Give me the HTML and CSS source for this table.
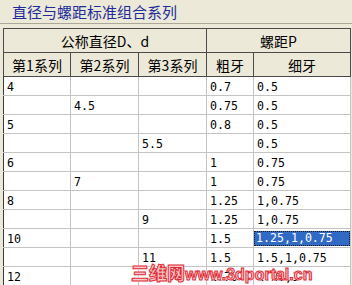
FILE: index.html
```html
<!DOCTYPE html>
<html lang="zh-CN">
<head>
<meta charset="utf-8">
<link rel="stylesheet" href="styles.css">
</head>
<body>
<div class="page">
  <div class="title">直径与螺距标准组合系列</div>
  <table class="grid">
    <colgroup>
      <col class="c1"><col class="c2"><col class="c3"><col class="c4"><col class="c5">
    </colgroup>
    <thead>
      <tr class="h"><th colspan="3">公称直径D、d</th><th colspan="2">螺距P</th></tr>
      <tr class="h"><th>第1系列</th><th>第2系列</th><th>第3系列</th><th>粗牙</th><th>细牙</th></tr>
    </thead>
    <tbody>
      <tr><td>4</td><td></td><td></td><td>0.7</td><td>0.5</td></tr>
      <tr><td></td><td>4.5</td><td></td><td>0.75</td><td>0.5</td></tr>
      <tr><td>5</td><td></td><td></td><td>0.8</td><td>0.5</td></tr>
      <tr><td></td><td></td><td>5.5</td><td></td><td>0.5</td></tr>
      <tr><td>6</td><td></td><td></td><td>1</td><td>0.75</td></tr>
      <tr><td></td><td>7</td><td></td><td>1</td><td>0.75</td></tr>
      <tr><td>8</td><td></td><td></td><td>1.25</td><td>1,0.75</td></tr>
      <tr><td></td><td></td><td>9</td><td>1.25</td><td>1,0.75</td></tr>
      <tr><td>10</td><td></td><td></td><td>1.5</td><td class="selcell"><span class="sel">1.25,1,0.75</span></td></tr>
      <tr><td></td><td></td><td>11</td><td>1.5</td><td>1.5,1,0.75</td></tr>
      <tr><td>12</td><td></td><td></td><td>1.75</td><td>1.25,1</td></tr>
    </tbody>
  </table>
  <div class="mark"><span class="mark-cn">三维网</span>www.3dportal.cn</div>
</div>
</body>
</html>
```
FILE: styles.css
```css
html, body {
  margin: 0;
  padding: 0;
  background: #ece9d8;
}
.page {
  position: relative;
  width: 352px;
  height: 285px;
  overflow: hidden;
  background: #ece9d8;
}
.title {
  height: 23px;
  line-height: 23px;
  padding-left: 12px;
  font-family: "Noto Sans CJK SC", sans-serif;
  font-size: 15px;
  color: #1d2c9a;
  border-bottom: 1px solid #aca899;
  margin-bottom: 4px;
}
.grid {
  margin-left: 3px;
  width: 347px;
  border-collapse: collapse;
  table-layout: fixed;
  background: #fff;
}
.c1 { width: 67px; }
.c2 { width: 68px; }
.c3 { width: 68px; }
.c4 { width: 47px; }
.c5 { width: 97px; }
.grid th {
  height: 23px;
  padding: 0;
  background: #ece9d8;
  border: 1px solid #4a4a4a;
  font-family: "Noto Sans CJK SC", sans-serif;
  font-weight: normal;
  font-size: 14px;
  color: #000;
  text-align: center;
  line-height: 22px;
}
.grid td {
  height: 16px;
  padding: 2px 0 0 3px;
  border: 1px solid #c4c4c4;
  font-family: "DejaVu Sans Mono", monospace;
  font-size: 11.6px;
  line-height: 16px;
  color: #000;
  vertical-align: top;
  white-space: nowrap;
  overflow: hidden;
}
.grid td:first-child {
  border-left: 1px solid #3a3a3a;
}
.grid td.selcell {
  padding: 2px 0 0 0;
}
.sel {
  display: block;
  height: 13px;
  padding-left: 1px;
  line-height: 13px;
  background: #316ac5;
  color: #fff;
  border: 1px dotted #1a1a1a;
}
.mark {
  position: absolute;
  left: 131px;
  top: 259px;
  font-family: "Liberation Sans", sans-serif;
  font-weight: bold;
  font-size: 16px;
  color: #f7c9c9;
  -webkit-text-stroke: 1px #e12a35;
  text-shadow: 1px 0 #fff, -1px 0 #fff, 0 1px #fff, 0 -1px #fff;
  white-space: nowrap;
}
.mark-cn {
  font-family: "Noto Sans CJK SC", sans-serif;
  font-size: 18px;
  font-weight: 900;
}
```
